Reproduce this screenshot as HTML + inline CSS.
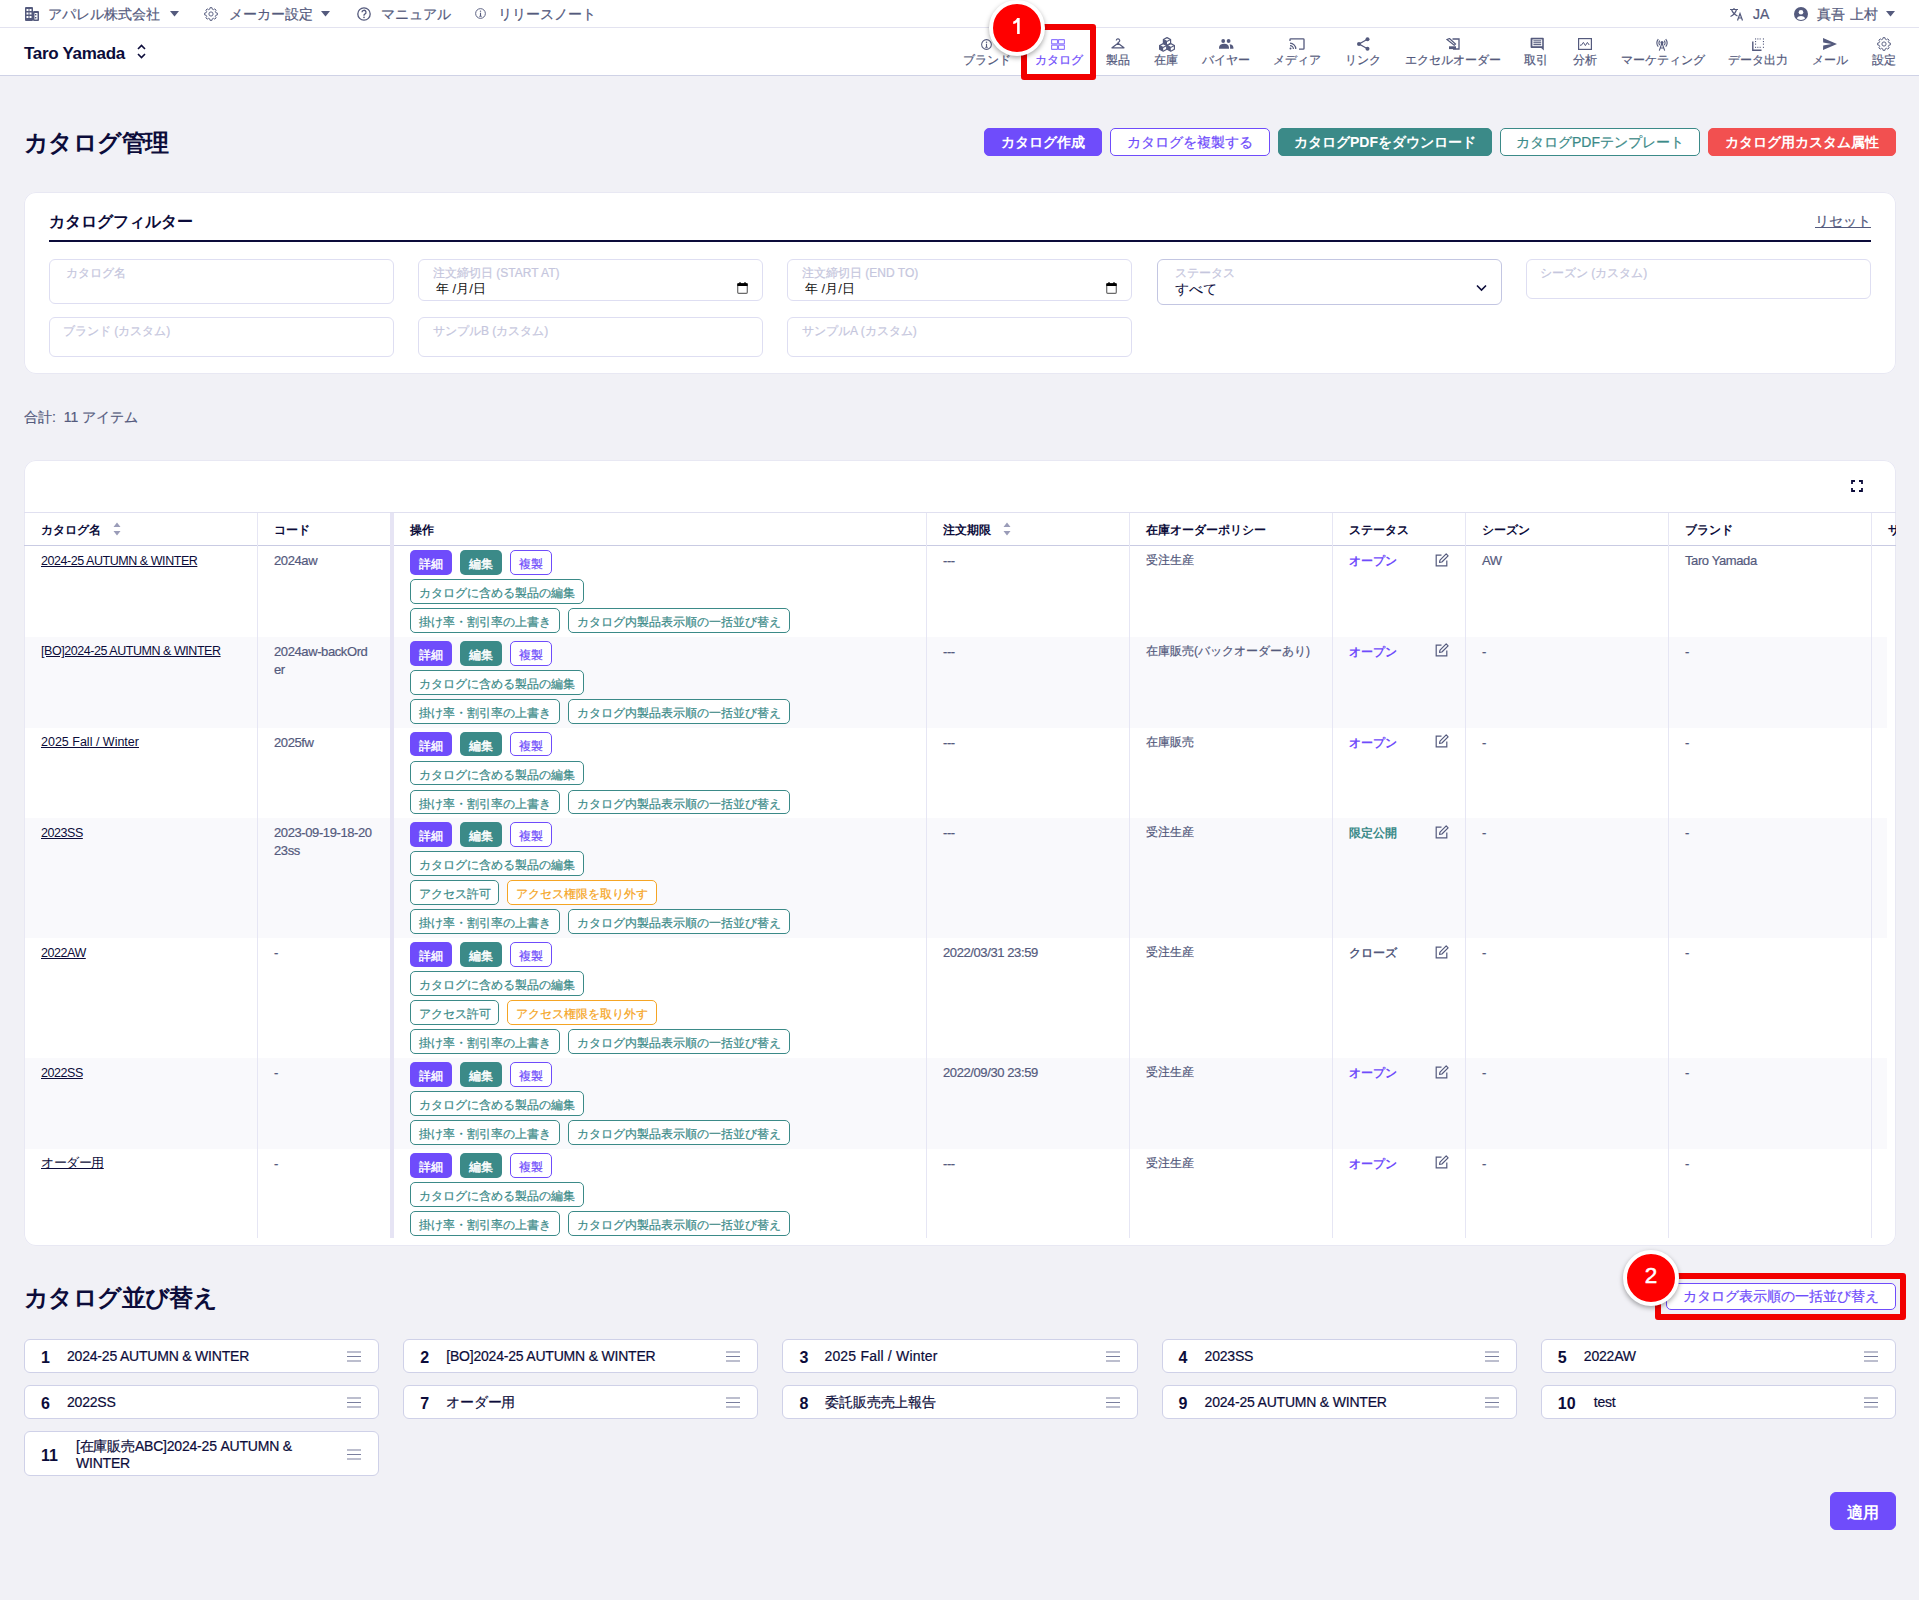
<!DOCTYPE html>
<html lang="ja">
<head>
<meta charset="utf-8">
<style>
*{box-sizing:border-box;margin:0;padding:0}
html,body{width:1919px;height:1600px;overflow:hidden}
body{background:#f1f1f6;font-family:"Liberation Sans",sans-serif;color:#0c0c3a;position:relative}
.abs{position:absolute}
svg{display:block}
/* top bar */
#topbar{left:0;top:0;width:1919px;height:28px;background:#fff;border-bottom:1px solid #e3e3f0}
#topbar .t{position:absolute;top:5px;font-size:14px;line-height:18px;color:#545a7d;white-space:nowrap}
#nav{left:0;top:28px;width:1919px;height:48px;background:#fff;border-bottom:1px solid #cfd2e6}
#nav .brand{position:absolute;left:24px;top:15px;font-size:17px;font-weight:bold;line-height:22px;color:#0c0c3a;letter-spacing:-0.3px}
.nl{position:absolute;top:25px;width:120px;text-align:center;color:#545a7d;font-size:12px;line-height:14px;white-space:nowrap}
.nl.act{color:#6f4cfb}

.h1{font-size:24px;font-weight:bold;line-height:32px;color:#0c0c3a;white-space:nowrap;letter-spacing:-0.6px}
.btn{height:28px;border-radius:5px;font-size:14px;line-height:26px;text-align:center;white-space:nowrap;border:1px solid transparent}
.pf{background:#6f4cfb;color:#fff;font-weight:bold;border-color:#6f4cfb}
.po{background:#fff;color:#6f4cfb;border-color:#6f4cfb}
.tf{background:#3b8a88;color:#fff;font-weight:bold;border-color:#3b8a88}
.to{background:#fff;color:#3b8a88;border-color:#3b8a88}
.rf{background:#f25050;color:#fff;font-weight:bold;border-color:#f25050}
.card{background:#fff;border-radius:12px;box-shadow:inset 0 0 0 1px #e8e8f3}
.fh{font-size:16px;font-weight:bold;line-height:22px;color:#0c0c3a;white-space:nowrap}
.reset{font-size:14px;line-height:20px;color:#545a7d;text-decoration:underline;white-space:nowrap}
.inp{width:345px;border:1px solid #dedef2;border-radius:6px;background:#fff}
.inp.sel{border-color:#c3c6e2}
.lbl{position:absolute;left:14px;top:5px;font-size:12px;line-height:16px;color:#c5c6dd;white-space:nowrap}
.dt{position:absolute;left:17px;top:21px;font-size:13px;line-height:16px;color:#111;white-space:nowrap}
.sv{position:absolute;left:17px;top:20px;font-size:14px;line-height:18px;color:#0c0c3a;white-space:nowrap}
.total{font-size:14px;line-height:20px;color:#545a7d;white-space:nowrap}

.rowbg{background:#f9f9fc}
.hl{height:1px;background:#e0e0f0}
.hl2{height:1px;background:#c9cbe3}
.vl{width:1px;background:#e6e6f4}
.vthick{width:4px;background:#e6e4f4}
.th{font-size:12px;font-weight:bold;line-height:18px;color:#0c0c3a;white-space:nowrap}
.td{font-size:13px;line-height:18px;color:#545a7d;white-space:nowrap;letter-spacing:-0.4px}
.td.jp{font-size:12px;letter-spacing:0}
.tdl{font-size:12.5px;letter-spacing:-0.45px;line-height:18px;color:#0c0c3a;white-space:nowrap;text-decoration:underline}
.st{font-size:12px;font-weight:bold;line-height:18px;white-space:nowrap}
.st.op{color:#6f4cfb}.st.lt{color:#3b8a88}.st.cl{color:#545a7d}
.sb{height:24.8px;border-radius:5px;font-size:12px;line-height:26.4px;text-align:center;white-space:nowrap;border:1px solid transparent}
.pf2{background:#6f4cfb;color:#fff;-webkit-text-stroke:0.4px #fff}
.tf2{background:#3b8a88;color:#fff;-webkit-text-stroke:0.4px #fff}
.po2{background:#fff;color:#6f4cfb;border-color:#6f4cfb}
.to2{background:#fff;color:#3b8a88;border-color:#3b8a88}
.oo2{background:#fff;color:#f5a524;border-color:#f5a524}

.si{background:#fff;border:1px solid #cfd1e8;border-radius:6px}
.sn{font-size:16px;font-weight:bold;line-height:22px;color:#0c0c3a;white-space:nowrap}
.stx{font-size:14px;line-height:20px;color:#0c0c3a;white-space:nowrap;letter-spacing:-0.2px}
.redbox{border:6px solid #f20000;border-radius:3px}
.badge{width:56px;height:56px;border-radius:50%;background:#f00;border:4px solid #fff;box-shadow:0 2px 5px rgba(0,0,0,.35);color:#fff;font-size:23px;line-height:48px;text-align:center;font-family:"Liberation Sans",sans-serif}

.po,.to,.po2,.to2,.oo2,.lbl,.reset,#topbar .t,.nl,.td,.stx,.total{-webkit-text-stroke:0.2px currentColor}
</style>
</head>
<body>
<!-- TOP BAR -->
<div id="topbar" class="abs">
  <svg class="abs" style="left:25px;top:7px" width="14" height="14" viewBox="0 0 14 14"><g fill="#545a7d"><rect x="0" y="0" width="8" height="14" rx="1"/><rect x="8" y="4" width="6" height="10" rx="1"/></g><g fill="#fff"><rect x="1.5" y="2" width="2" height="2"/><rect x="4.5" y="2" width="2" height="2"/><rect x="1.5" y="5.5" width="2" height="2"/><rect x="4.5" y="5.5" width="2" height="2"/><rect x="1.5" y="9" width="2" height="2"/><rect x="4.5" y="9" width="2" height="2"/><rect x="9.5" y="6" width="3" height="6.5"/></g><g fill="#545a7d"><rect x="10" y="7" width="1.4" height="1.4"/><rect x="10" y="10" width="1.4" height="1.4"/></g></svg>
  <span class="t" style="left:48px">アパレル株式会社</span>
  <svg class="abs" style="left:170px;top:11px" width="9" height="6" viewBox="0 0 9 6"><path d="M0 0H9L4.5 5.5Z" fill="#545a7d"/></svg>
  <svg class="abs" style="left:204px;top:7px" width="14" height="14" viewBox="0 0 24 24"><path fill="none" stroke="#545a7d" stroke-width="1.6" stroke-linejoin="round" d="M20.33 9.86 L22.88 10.35 L22.88 13.65 L20.33 14.14 L19.40 16.38 L20.86 18.52 L18.52 20.86 L16.38 19.40 L14.14 20.33 L13.65 22.88 L10.35 22.88 L9.86 20.33 L7.62 19.40 L5.48 20.86 L3.14 18.52 L4.60 16.38 L3.67 14.14 L1.12 13.65 L1.12 10.35 L3.67 9.86 L4.60 7.62 L3.14 5.48 L5.48 3.14 L7.62 4.60 L9.86 3.67 L10.35 1.12 L13.65 1.12 L14.14 3.67 L16.38 4.60 L18.52 3.14 L20.86 5.48 L19.40 7.62Z"/><circle cx="12" cy="12" r="3.6" fill="none" stroke="#545a7d" stroke-width="1.6"/></svg>
  <span class="t" style="left:229px">メーカー設定</span>
  <svg class="abs" style="left:321px;top:11px" width="9" height="6" viewBox="0 0 9 6"><path d="M0 0H9L4.5 5.5Z" fill="#545a7d"/></svg>
  <svg class="abs" style="left:357px;top:7px" width="14" height="14" viewBox="0 0 14 14"><circle cx="7" cy="7" r="6.2" fill="none" stroke="#545a7d" stroke-width="1.3"/><path d="M5 5.3a2 2 0 1 1 2.8 1.8c-.6.3-.8.6-.8 1.3v.4" fill="none" stroke="#545a7d" stroke-width="1.3"/><circle cx="7" cy="10.4" r=".8" fill="#545a7d"/></svg>
  <span class="t" style="left:381px">マニュアル</span>
  <svg class="abs" style="left:475px;top:8px" width="11" height="11" viewBox="0 0 14 14"><circle cx="7" cy="7" r="6.2" fill="none" stroke="#545a7d" stroke-width="1.2"/><rect x="6.3" y="6" width="1.4" height="4.5" fill="#545a7d"/><rect x="5.3" y="10" width="3.4" height="1" fill="#545a7d"/><circle cx="7" cy="4" r=".9" fill="#545a7d"/></svg>
  <span class="t" style="left:498px">リリースノート</span>

  <svg class="abs" style="left:1729px;top:7px" width="15" height="14" viewBox="0 0 15 14"><path d="M1 2.5h8M5 1v1.5M2.5 2.5c1 3 3 5 6 6.5M7.5 2.5c-.8 3-2.8 5.5-6 7" fill="none" stroke="#545a7d" stroke-width="1.2"/><path d="M8.5 13.5l2.5-7 2.5 7M9.4 11h3.2" fill="none" stroke="#545a7d" stroke-width="1.2"/></svg>
  <span class="t" style="left:1753px">JA</span>
  <svg class="abs" style="left:1794px;top:7px" width="14" height="14" viewBox="0 0 14 14"><circle cx="7" cy="7" r="7" fill="#545a7d"/><circle cx="7" cy="5.3" r="2.3" fill="#fff"/><path d="M2.8 11.3c1-1.7 2.5-2.4 4.2-2.4s3.2.7 4.2 2.4c-1.1 1.1-2.6 1.7-4.2 1.7s-3.1-.6-4.2-1.7z" fill="#fff"/></svg>
  <span class="t" style="left:1817px;letter-spacing:0.3px">真吾 上村</span>
  <svg class="abs" style="left:1886px;top:11px" width="9" height="6" viewBox="0 0 9 6"><path d="M0 0H9L4.5 5.5Z" fill="#545a7d"/></svg>
</div>

<!-- NAV -->
<div id="nav" class="abs">
  <div class="brand">Taro Yamada</div>
  <svg class="abs" style="left:137px;top:16px" width="9" height="15" viewBox="0 0 9 15"><path d="M1 5L4.5 1.5 8 5M1 10l3.5 3.5L8 10" fill="none" stroke="#0c0c3a" stroke-width="1.6"/></svg>
  <!-- nav icons (absolute page coords minus nav top 28) -->
  <svg class="abs" style="left:981px;top:11px" width="11" height="11" viewBox="0 0 14 14"><circle cx="7" cy="7" r="6.2" fill="none" stroke="#545a7d" stroke-width="1.3"/><rect x="6.3" y="6" width="1.4" height="4.5" fill="#545a7d"/><rect x="5.3" y="10" width="3.4" height="1.1" fill="#545a7d"/><circle cx="7" cy="4" r=".95" fill="#545a7d"/></svg>
  <svg class="abs" style="left:1051px;top:10.5px" width="14" height="11" viewBox="0 0 14 11"><g fill="none" stroke="#8f78ff" stroke-width="1.1"><rect x="0.6" y="0.6" width="5.9" height="4.3" rx=".4"/><rect x="7.5" y="0.6" width="5.9" height="4.3" rx=".4"/><rect x="0.6" y="6.1" width="5.9" height="4.3" rx=".4"/><rect x="7.5" y="6.1" width="5.9" height="4.3" rx=".4"/></g><rect x="6.1" y="4.5" width="1.8" height="2" fill="#c4b8ff"/></svg>
  <svg class="abs" style="left:1111px;top:10px" width="14" height="11" viewBox="0 0 14 11"><path d="M5.3 2.6a1.7 1.7 0 1 1 2.4 1.5c-.5.2-.7.5-.7 1L7 5.3L1 9.8h12L7 5.3" fill="none" stroke="#545a7d" stroke-width="1.2" stroke-linejoin="round"/></svg>
  <svg class="abs" style="left:1158.5px;top:8.5px" width="16" height="15" viewBox="0 0 16 15"><polygon points="4.40,2.50 8.00,0.60 11.60,2.50 11.60,6.30 8.00,8.20 4.40,6.30" fill="#fff" stroke="#545a7d" stroke-width="1.2" stroke-linejoin="round"/><polygon points="4.40,2.50 8.00,4.40 8.00,8.20 4.40,6.30" fill="#545a7d"/><polyline points="4.40,2.50 8.00,4.40 11.60,2.50" fill="none" stroke="#545a7d" stroke-width="1.1"/><polygon points="0.60,8.50 4.20,6.60 7.80,8.50 7.80,12.30 4.20,14.20 0.60,12.30" fill="#fff" stroke="#545a7d" stroke-width="1.2" stroke-linejoin="round"/><polygon points="0.60,8.50 4.20,10.40 4.20,14.20 0.60,12.30" fill="#545a7d"/><polyline points="0.60,8.50 4.20,10.40 7.80,8.50" fill="none" stroke="#545a7d" stroke-width="1.1"/><polygon points="8.20,8.50 11.80,6.60 15.40,8.50 15.40,12.30 11.80,14.20 8.20,12.30" fill="#fff" stroke="#545a7d" stroke-width="1.2" stroke-linejoin="round"/><polygon points="8.20,8.50 11.80,10.40 11.80,14.20 8.20,12.30" fill="#545a7d"/><polyline points="8.20,8.50 11.80,10.40 15.40,8.50" fill="none" stroke="#545a7d" stroke-width="1.1"/></svg>
  <svg class="abs" style="left:1219px;top:11px" width="15" height="10" viewBox="0 0 15 10"><g fill="#545a7d"><circle cx="4.2" cy="2" r="1.9"/><circle cx="9.6" cy="2" r="1.9"/><path d="M0 8.5c0-2.5 2-3.8 5.2-3.8S9.5 6 10 8.3V9.8H0z"/><path d="M10.6 5.2c2 .1 3.5 1.1 3.8 3V9.8h-3.3V8c0-1-.2-2-.5-2.8z"/></g></svg>
  <svg class="abs" style="left:1289px;top:10px" width="16" height="12" viewBox="0 0 16 12"><path d="M1 3V1.6C1 1.2 1.3 .8 1.8 .8h12.4c.5 0 .8.4.8.8v8.8c0 .5-.3.8-.8.8H10" fill="none" stroke="#545a7d" stroke-width="1.3"/><path d="M1 5.2a5.8 5.8 0 0 1 5.8 5.8M1 7.6a3.4 3.4 0 0 1 3.4 3.4" fill="none" stroke="#545a7d" stroke-width="1.2"/><circle cx="1.5" cy="10.6" r="1" fill="#545a7d"/></svg>
  <svg class="abs" style="left:1357px;top:9px" width="13" height="14" viewBox="0 0 13 14"><g fill="#545a7d"><circle cx="10.5" cy="2.2" r="2"/><circle cx="2" cy="7" r="2"/><circle cx="10.5" cy="11.8" r="2"/></g><path d="M10.5 2.2L2 7l8.5 4.8" fill="none" stroke="#545a7d" stroke-width="1.3"/></svg>
  <svg class="abs" style="left:1446px;top:10px" width="14" height="12" viewBox="0 0 14 12"><path d="M6.5 1H13v10H7" fill="none" stroke="#545a7d" stroke-width="1.3"/><path d="M1 1.5l2.5-1 6 5.5-1.3 1.3z" fill="none" stroke="#545a7d" stroke-width="1.2"/><rect x="3" y="8.3" width="7" height="2.8" fill="#545a7d"/></svg>
  <svg class="abs" style="left:1530px;top:9px" width="15" height="14" viewBox="0 0 15 14"><path d="M1.4 .8h11.6c.5 0 .8.3.8.8v11.8l-2.6-2.3H1.4c-.4 0-.8-.3-.8-.8V1.6c0-.5.4-.8.8-.8z" fill="#545a7d"/><rect x="2.4" y="2.4" width="9.8" height="6.8" fill="#fff"/><g fill="#545a7d"><rect x="3.4" y="3.3" width="7.8" height="1.1"/><rect x="3.4" y="5.2" width="7.8" height="1.1"/><rect x="3.4" y="7.1" width="7.8" height="1.1"/></g></svg>
  <svg class="abs" style="left:1578px;top:10px" width="14" height="12" viewBox="0 0 14 12"><rect x=".6" y=".6" width="12.8" height="10.8" fill="none" stroke="#545a7d" stroke-width="1.2"/><path d="M2 7.2h1.4l2-2.8 2 3.2 2-3.2 1.8 2.6" fill="none" stroke="#545a7d" stroke-width="1"/></svg>
  <svg class="abs" style="left:1655px;top:10px" width="14" height="13" viewBox="0 0 14 13"><g fill="none" stroke="#545a7d" stroke-width="1.1"><path d="M3.3 1.2a6 6 0 0 0 0 7.4M10.7 1.2a6 6 0 0 1 0 7.4M4.8 2.6a3.8 3.8 0 0 0 0 4.6M9.2 2.6a3.8 3.8 0 0 1 0 4.6"/><path d="M7 5L4.3 12.6M7 5l2.7 7.6M5.2 10h3.6"/></g><circle cx="7" cy="4.6" r="1.5" fill="#545a7d"/></svg>
  <svg class="abs" style="left:1752px;top:10px" width="13" height="13" viewBox="0 0 13 13"><path d="M.8 3.5v8.7h8.7" fill="none" stroke="#545a7d" stroke-width="1.4"/><g fill="#545a7d"><rect x="3" y=".4" width="1.1" height="1.1"/><rect x="5.3" y=".4" width="1.1" height="1.1"/><rect x="7.6" y=".4" width="1.1" height="1.1"/><rect x="10.9" y=".4" width="1.1" height="1.1"/><rect x="3" y="3" width="1.1" height="1.1"/><rect x="10.9" y="3" width="1.1" height="1.1"/><rect x="3" y="5.6" width="1.1" height="1.1"/><rect x="10.9" y="5.6" width="1.1" height="1.1"/><rect x="3" y="8.8" width="1.1" height="1.1"/><rect x="5.3" y="8.8" width="1.1" height="1.1"/><rect x="7.6" y="8.8" width="1.1" height="1.1"/><rect x="10.9" y="8.8" width="1.1" height="1.1"/></g></svg>
  <svg class="abs" style="left:1823px;top:10px" width="14" height="12" viewBox="0 0 14 12"><path d="M0 0L14 6 0 12 .2 7.4 8.5 6 .2 4.6z" fill="#545a7d"/></svg>
  <svg class="abs" style="left:1877px;top:9px" width="14" height="14" viewBox="0 0 24 24"><path fill="none" stroke="#545a7d" stroke-width="1.6" stroke-linejoin="round" d="M20.33 9.86 L22.88 10.35 L22.88 13.65 L20.33 14.14 L19.40 16.38 L20.86 18.52 L18.52 20.86 L16.38 19.40 L14.14 20.33 L13.65 22.88 L10.35 22.88 L9.86 20.33 L7.62 19.40 L5.48 20.86 L3.14 18.52 L4.60 16.38 L3.67 14.14 L1.12 13.65 L1.12 10.35 L3.67 9.86 L4.60 7.62 L3.14 5.48 L5.48 3.14 L7.62 4.60 L9.86 3.67 L10.35 1.12 L13.65 1.12 L14.14 3.67 L16.38 4.60 L18.52 3.14 L20.86 5.48 L19.40 7.62Z"/><circle cx="12" cy="12" r="3.6" fill="none" stroke="#545a7d" stroke-width="1.6"/></svg>
  <!-- nav labels -->
  <span class="nl" style="left:926.6px">ブランド</span>
  <span class="nl act" style="left:998.5px">カタログ</span>
  <span class="nl" style="left:1058.3px">製品</span>
  <span class="nl" style="left:1106.3px">在庫</span>
  <span class="nl" style="left:1166px">バイヤー</span>
  <span class="nl" style="left:1237.2px">メディア</span>
  <span class="nl" style="left:1303px">リンク</span>
  <span class="nl" style="left:1392.8px">エクセルオーダー</span>
  <span class="nl" style="left:1476.4px">取引</span>
  <span class="nl" style="left:1524.8px">分析</span>
  <span class="nl" style="left:1602.5px">マーケティング</span>
  <span class="nl" style="left:1698px">データ出力</span>
  <span class="nl" style="left:1770.3px">メール</span>
  <span class="nl" style="left:1823.9px">設定</span>
</div>

<!-- TITLE + ACTION BUTTONS -->
<div class="abs h1" style="left:24px;top:127px">カタログ管理</div>
<div class="abs btn pf" style="left:984px;top:128px;width:118px">カタログ作成</div>
<div class="abs btn po" style="left:1110px;top:128px;width:160px">カタログを複製する</div>
<div class="abs btn tf" style="left:1278px;top:128px;width:214px">カタログPDFをダウンロード</div>
<div class="abs btn to" style="left:1500px;top:128px;width:200px">カタログPDFテンプレート</div>
<div class="abs btn rf" style="left:1708px;top:128px;width:188px">カタログ用カスタム属性</div>

<!-- FILTER CARD -->
<div class="abs card" style="left:24px;top:192px;width:1872px;height:182px">
  <div class="abs fh" style="left:25px;top:19px">カタログフィルター</div>
  <div class="abs reset" style="left:1791px;top:19px">リセット</div>
  <div class="abs" style="left:25px;top:48px;width:1822px;height:2px;background:#0c0c3a"></div>
  <!-- row 1 -->
  <div class="abs inp" style="left:25px;top:67px;height:45px"><span class="lbl" style="left:16px">カタログ名</span></div>
  <div class="abs inp" style="left:394px;top:67px;height:42px"><span class="lbl">注文締切日 (START AT)</span><span class="dt">年 /月/日</span>
    <svg class="abs" style="left:318px;top:22px" width="11" height="12" viewBox="0 0 11 12"><rect x=".7" y="1.7" width="9.6" height="9.6" rx="1" fill="none" stroke="#6a6a6a" stroke-width="1.2"/><rect x=".3" y="1.3" width="10.4" height="2.8" rx=".6" fill="#000"/><rect x="2.3" y=".2" width="1.4" height="2" fill="#000"/><rect x="7.3" y=".2" width="1.4" height="2" fill="#000"/></svg></div>
  <div class="abs inp" style="left:763px;top:67px;height:42px"><span class="lbl">注文締切日 (END TO)</span><span class="dt">年 /月/日</span>
    <svg class="abs" style="left:318px;top:22px" width="11" height="12" viewBox="0 0 11 12"><rect x=".7" y="1.7" width="9.6" height="9.6" rx="1" fill="none" stroke="#6a6a6a" stroke-width="1.2"/><rect x=".3" y="1.3" width="10.4" height="2.8" rx=".6" fill="#000"/><rect x="2.3" y=".2" width="1.4" height="2" fill="#000"/><rect x="7.3" y=".2" width="1.4" height="2" fill="#000"/></svg></div>
  <div class="abs inp sel" style="left:1133px;top:67px;height:46px"><span class="lbl" style="left:17px">ステータス</span><span class="sv">すべて</span>
    <svg class="abs" style="left:318px;top:24px" width="11" height="8" viewBox="0 0 11 8"><path d="M1 1.5l4.5 4.5L10 1.5" fill="none" stroke="#0c0c3a" stroke-width="1.6"/></svg></div>
  <div class="abs inp" style="left:1502px;top:67px;height:40px"><span class="lbl" style="left:13px">シーズン (カスタム)</span></div>
  <!-- row 2 -->
  <div class="abs inp" style="left:25px;top:125px;height:40px"><span class="lbl" style="left:13px">ブランド (カスタム)</span></div>
  <div class="abs inp" style="left:394px;top:125px;height:40px"><span class="lbl">サンプルB (カスタム)</span></div>
  <div class="abs inp" style="left:763px;top:125px;height:40px"><span class="lbl">サンプルA (カスタム)</span></div>
</div>

<div class="abs total" style="left:24px;top:407px">合計:&nbsp; 11 アイテム</div>

<!-- TABLE CARD -->
<div class="abs card" id="tcard" style="left:24px;top:460px;width:1872px;height:786px;overflow:hidden">
<svg class="abs" style="left:1827px;top:20px" width="12" height="12" viewBox="0 0 12 12"><path d="M1 4V1h3M8 1h3v3M11 8v3H8M4 11H1V8" fill="none" stroke="#0c0c3a" stroke-width="1.8"/></svg>
<div class="abs rowbg" style="left:1px;top:176.8px;width:1862px;height:90.8px"></div>
<div class="abs rowbg" style="left:1px;top:358.4px;width:1862px;height:119.8px"></div>
<div class="abs rowbg" style="left:1px;top:598.0px;width:1862px;height:90.8px"></div>
<div class="abs hl" style="left:0;top:52px;width:1872px"></div>
<div class="abs hl2" style="left:0;top:85px;width:1872px"></div>
<div class="abs vl" style="left:233px;top:53px;height:725px"></div>
<div class="abs vl" style="left:902px;top:53px;height:725px"></div>
<div class="abs vl" style="left:1105px;top:53px;height:725px"></div>
<div class="abs vl" style="left:1308px;top:53px;height:725px"></div>
<div class="abs vl" style="left:1441px;top:53px;height:725px"></div>
<div class="abs vl" style="left:1644px;top:53px;height:725px"></div>
<div class="abs vl" style="left:1847px;top:53px;height:725px"></div>
<div class="abs vthick" style="left:366px;top:53px;height:725px"></div>
<div class="abs th" style="left:17px;top:61px">カタログ名</div>
<div class="abs th" style="left:250px;top:61px">コード</div>
<div class="abs th" style="left:386px;top:61px">操作</div>
<div class="abs th" style="left:919px;top:61px">注文期限</div>
<div class="abs th" style="left:1122px;top:61px">在庫オーダーポリシー</div>
<div class="abs th" style="left:1325px;top:61px">ステータス</div>
<div class="abs th" style="left:1458px;top:61px">シーズン</div>
<div class="abs th" style="left:1661px;top:61px">ブランド</div>
<div class="abs th" style="left:1864px;top:61px">サンプルA</div>
<svg class="abs" style="left:89px;top:62px" width="8" height="14" viewBox="0 0 8 14"><path d="M4 0.5L7.5 5H0.5z M4 13.5L7.5 9H0.5z" fill="#9a9cb8"/></svg>
<svg class="abs" style="left:979px;top:62px" width="8" height="14" viewBox="0 0 8 14"><path d="M4 0.5L7.5 5H0.5z M4 13.5L7.5 9H0.5z" fill="#9a9cb8"/></svg>
<div class="abs tdl" style="left:17px;top:91.5px">2024-25 AUTUMN &amp; WINTER</div>
<div class="abs td" style="left:250px;top:92.0px;width:110px">2024aw</div>
<div class="abs td" style="left:919px;top:92.0px">---</div>
<div class="abs td jp" style="left:1122px;top:91.0px">受注生産</div>
<div class="abs st op" style="left:1325px;top:92.0px">オープン</div>
<svg class="abs" style="left:1411px;top:92.5px" width="14" height="14" viewBox="0 0 14 14"><path d="M6.5 2.2H1.2v10.6h10.6V7.5" fill="none" stroke="#545a7d" stroke-width="1.2"/><path d="M11.2.9l1.9 1.9-6.2 6.2-2.4.5.5-2.4z" fill="none" stroke="#545a7d" stroke-width="1.2" stroke-linejoin="round"/></svg>
<div class="abs td" style="left:1458px;top:92.0px">AW</div>
<div class="abs td" style="left:1661px;top:92.0px">Taro Yamada</div>
<div class="abs sb pf2" style="left:386px;top:90.0px;width:42px">詳細</div>
<div class="abs sb tf2" style="left:436px;top:90.0px;width:42px">編集</div>
<div class="abs sb po2" style="left:486px;top:90.0px;width:42px">複製</div>
<div class="abs sb to2" style="left:386px;top:119.0px;width:174px">カタログに含める製品の編集</div>
<div class="abs sb to2" style="left:386px;top:148.0px;width:150px">掛け率・割引率の上書き</div>
<div class="abs sb to2" style="left:544px;top:148.0px;width:222px">カタログ内製品表示順の一括並び替え</div>
<div class="abs tdl" style="left:17px;top:182.3px">[BO]2024-25 AUTUMN &amp; WINTER</div>
<div class="abs td" style="left:250px;top:182.8px;width:110px">2024aw-backOrd<br>er</div>
<div class="abs td" style="left:919px;top:182.8px">---</div>
<div class="abs td jp" style="left:1122px;top:181.8px">在庫販売(バックオーダーあり)</div>
<div class="abs st op" style="left:1325px;top:182.8px">オープン</div>
<svg class="abs" style="left:1411px;top:183.3px" width="14" height="14" viewBox="0 0 14 14"><path d="M6.5 2.2H1.2v10.6h10.6V7.5" fill="none" stroke="#545a7d" stroke-width="1.2"/><path d="M11.2.9l1.9 1.9-6.2 6.2-2.4.5.5-2.4z" fill="none" stroke="#545a7d" stroke-width="1.2" stroke-linejoin="round"/></svg>
<div class="abs td" style="left:1458px;top:182.8px">-</div>
<div class="abs td" style="left:1661px;top:182.8px">-</div>
<div class="abs sb pf2" style="left:386px;top:180.8px;width:42px">詳細</div>
<div class="abs sb tf2" style="left:436px;top:180.8px;width:42px">編集</div>
<div class="abs sb po2" style="left:486px;top:180.8px;width:42px">複製</div>
<div class="abs sb to2" style="left:386px;top:209.8px;width:174px">カタログに含める製品の編集</div>
<div class="abs sb to2" style="left:386px;top:238.8px;width:150px">掛け率・割引率の上書き</div>
<div class="abs sb to2" style="left:544px;top:238.8px;width:222px">カタログ内製品表示順の一括並び替え</div>
<div class="abs tdl" style="left:17px;top:273.1px;letter-spacing:0">2025 Fall / Winter</div>
<div class="abs td" style="left:250px;top:273.6px;width:110px">2025fw</div>
<div class="abs td" style="left:919px;top:273.6px">---</div>
<div class="abs td jp" style="left:1122px;top:272.6px">在庫販売</div>
<div class="abs st op" style="left:1325px;top:273.6px">オープン</div>
<svg class="abs" style="left:1411px;top:274.1px" width="14" height="14" viewBox="0 0 14 14"><path d="M6.5 2.2H1.2v10.6h10.6V7.5" fill="none" stroke="#545a7d" stroke-width="1.2"/><path d="M11.2.9l1.9 1.9-6.2 6.2-2.4.5.5-2.4z" fill="none" stroke="#545a7d" stroke-width="1.2" stroke-linejoin="round"/></svg>
<div class="abs td" style="left:1458px;top:273.6px">-</div>
<div class="abs td" style="left:1661px;top:273.6px">-</div>
<div class="abs sb pf2" style="left:386px;top:271.6px;width:42px">詳細</div>
<div class="abs sb tf2" style="left:436px;top:271.6px;width:42px">編集</div>
<div class="abs sb po2" style="left:486px;top:271.6px;width:42px">複製</div>
<div class="abs sb to2" style="left:386px;top:300.6px;width:174px">カタログに含める製品の編集</div>
<div class="abs sb to2" style="left:386px;top:329.6px;width:150px">掛け率・割引率の上書き</div>
<div class="abs sb to2" style="left:544px;top:329.6px;width:222px">カタログ内製品表示順の一括並び替え</div>
<div class="abs tdl" style="left:17px;top:363.9px">2023SS</div>
<div class="abs td" style="left:250px;top:364.4px;width:110px">2023-09-19-18-20<br>23ss</div>
<div class="abs td" style="left:919px;top:364.4px">---</div>
<div class="abs td jp" style="left:1122px;top:363.4px">受注生産</div>
<div class="abs st lt" style="left:1325px;top:364.4px">限定公開</div>
<svg class="abs" style="left:1411px;top:364.9px" width="14" height="14" viewBox="0 0 14 14"><path d="M6.5 2.2H1.2v10.6h10.6V7.5" fill="none" stroke="#545a7d" stroke-width="1.2"/><path d="M11.2.9l1.9 1.9-6.2 6.2-2.4.5.5-2.4z" fill="none" stroke="#545a7d" stroke-width="1.2" stroke-linejoin="round"/></svg>
<div class="abs td" style="left:1458px;top:364.4px">-</div>
<div class="abs td" style="left:1661px;top:364.4px">-</div>
<div class="abs sb pf2" style="left:386px;top:362.4px;width:42px">詳細</div>
<div class="abs sb tf2" style="left:436px;top:362.4px;width:42px">編集</div>
<div class="abs sb po2" style="left:486px;top:362.4px;width:42px">複製</div>
<div class="abs sb to2" style="left:386px;top:391.4px;width:174px">カタログに含める製品の編集</div>
<div class="abs sb to2" style="left:386px;top:420.4px;width:89px">アクセス許可</div>
<div class="abs sb oo2" style="left:483px;top:420.4px;width:150px">アクセス権限を取り外す</div>
<div class="abs sb to2" style="left:386px;top:449.4px;width:150px">掛け率・割引率の上書き</div>
<div class="abs sb to2" style="left:544px;top:449.4px;width:222px">カタログ内製品表示順の一括並び替え</div>
<div class="abs tdl" style="left:17px;top:483.7px">2022AW</div>
<div class="abs td" style="left:250px;top:484.2px;width:110px">-</div>
<div class="abs td" style="left:919px;top:484.2px">2022/03/31 23:59</div>
<div class="abs td jp" style="left:1122px;top:483.2px">受注生産</div>
<div class="abs st cl" style="left:1325px;top:484.2px">クローズ</div>
<svg class="abs" style="left:1411px;top:484.7px" width="14" height="14" viewBox="0 0 14 14"><path d="M6.5 2.2H1.2v10.6h10.6V7.5" fill="none" stroke="#545a7d" stroke-width="1.2"/><path d="M11.2.9l1.9 1.9-6.2 6.2-2.4.5.5-2.4z" fill="none" stroke="#545a7d" stroke-width="1.2" stroke-linejoin="round"/></svg>
<div class="abs td" style="left:1458px;top:484.2px">-</div>
<div class="abs td" style="left:1661px;top:484.2px">-</div>
<div class="abs sb pf2" style="left:386px;top:482.2px;width:42px">詳細</div>
<div class="abs sb tf2" style="left:436px;top:482.2px;width:42px">編集</div>
<div class="abs sb po2" style="left:486px;top:482.2px;width:42px">複製</div>
<div class="abs sb to2" style="left:386px;top:511.2px;width:174px">カタログに含める製品の編集</div>
<div class="abs sb to2" style="left:386px;top:540.2px;width:89px">アクセス許可</div>
<div class="abs sb oo2" style="left:483px;top:540.2px;width:150px">アクセス権限を取り外す</div>
<div class="abs sb to2" style="left:386px;top:569.2px;width:150px">掛け率・割引率の上書き</div>
<div class="abs sb to2" style="left:544px;top:569.2px;width:222px">カタログ内製品表示順の一括並び替え</div>
<div class="abs tdl" style="left:17px;top:603.5px">2022SS</div>
<div class="abs td" style="left:250px;top:604.0px;width:110px">-</div>
<div class="abs td" style="left:919px;top:604.0px">2022/09/30 23:59</div>
<div class="abs td jp" style="left:1122px;top:603.0px">受注生産</div>
<div class="abs st op" style="left:1325px;top:604.0px">オープン</div>
<svg class="abs" style="left:1411px;top:604.5px" width="14" height="14" viewBox="0 0 14 14"><path d="M6.5 2.2H1.2v10.6h10.6V7.5" fill="none" stroke="#545a7d" stroke-width="1.2"/><path d="M11.2.9l1.9 1.9-6.2 6.2-2.4.5.5-2.4z" fill="none" stroke="#545a7d" stroke-width="1.2" stroke-linejoin="round"/></svg>
<div class="abs td" style="left:1458px;top:604.0px">-</div>
<div class="abs td" style="left:1661px;top:604.0px">-</div>
<div class="abs sb pf2" style="left:386px;top:602.0px;width:42px">詳細</div>
<div class="abs sb tf2" style="left:436px;top:602.0px;width:42px">編集</div>
<div class="abs sb po2" style="left:486px;top:602.0px;width:42px">複製</div>
<div class="abs sb to2" style="left:386px;top:631.0px;width:174px">カタログに含める製品の編集</div>
<div class="abs sb to2" style="left:386px;top:660.0px;width:150px">掛け率・割引率の上書き</div>
<div class="abs sb to2" style="left:544px;top:660.0px;width:222px">カタログ内製品表示順の一括並び替え</div>
<div class="abs tdl" style="left:17px;top:694.3px">オーダー用</div>
<div class="abs td" style="left:250px;top:694.8px;width:110px">-</div>
<div class="abs td" style="left:919px;top:694.8px">---</div>
<div class="abs td jp" style="left:1122px;top:693.8px">受注生産</div>
<div class="abs st op" style="left:1325px;top:694.8px">オープン</div>
<svg class="abs" style="left:1411px;top:695.3px" width="14" height="14" viewBox="0 0 14 14"><path d="M6.5 2.2H1.2v10.6h10.6V7.5" fill="none" stroke="#545a7d" stroke-width="1.2"/><path d="M11.2.9l1.9 1.9-6.2 6.2-2.4.5.5-2.4z" fill="none" stroke="#545a7d" stroke-width="1.2" stroke-linejoin="round"/></svg>
<div class="abs td" style="left:1458px;top:694.8px">-</div>
<div class="abs td" style="left:1661px;top:694.8px">-</div>
<div class="abs sb pf2" style="left:386px;top:692.8px;width:42px">詳細</div>
<div class="abs sb tf2" style="left:436px;top:692.8px;width:42px">編集</div>
<div class="abs sb po2" style="left:486px;top:692.8px;width:42px">複製</div>
<div class="abs sb to2" style="left:386px;top:721.8px;width:174px">カタログに含める製品の編集</div>
<div class="abs sb to2" style="left:386px;top:750.8px;width:150px">掛け率・割引率の上書き</div>
<div class="abs sb to2" style="left:544px;top:750.8px;width:222px">カタログ内製品表示順の一括並び替え</div>
</div>
<!-- SORT SECTION -->
<div class="abs h1" style="left:24px;top:1282px">カタログ並び替え</div>
<div class="abs si" style="left:24.0px;top:1339px;width:355.2px;height:34px">
<span class="abs sn" style="left:16px;top:7.0px">1</span>
<span class="abs stx" style="left:42px;top:6.0px">2024-25 AUTUMN &amp; WINTER</span>
<svg class="abs" style="left:322.2px;top:11.0px" width="14" height="11" viewBox="0 0 14 11"><path d="M0 1h14M0 5.5h14M0 10h14" stroke="#7a7f9e" stroke-width="1.2"/></svg>
</div>
<div class="abs si" style="left:403.2px;top:1339px;width:355.2px;height:34px">
<span class="abs sn" style="left:16px;top:7.0px">2</span>
<span class="abs stx" style="left:42px;top:6.0px">[BO]2024-25 AUTUMN &amp; WINTER</span>
<svg class="abs" style="left:322.2px;top:11.0px" width="14" height="11" viewBox="0 0 14 11"><path d="M0 1h14M0 5.5h14M0 10h14" stroke="#7a7f9e" stroke-width="1.2"/></svg>
</div>
<div class="abs si" style="left:782.4px;top:1339px;width:355.2px;height:34px">
<span class="abs sn" style="left:16px;top:7.0px">3</span>
<span class="abs stx" style="left:41px;top:6.0px;letter-spacing:0.2px">2025 Fall / Winter</span>
<svg class="abs" style="left:322.2px;top:11.0px" width="14" height="11" viewBox="0 0 14 11"><path d="M0 1h14M0 5.5h14M0 10h14" stroke="#7a7f9e" stroke-width="1.2"/></svg>
</div>
<div class="abs si" style="left:1161.6px;top:1339px;width:355.2px;height:34px">
<span class="abs sn" style="left:16px;top:7.0px">4</span>
<span class="abs stx" style="left:42px;top:6.0px">2023SS</span>
<svg class="abs" style="left:322.2px;top:11.0px" width="14" height="11" viewBox="0 0 14 11"><path d="M0 1h14M0 5.5h14M0 10h14" stroke="#7a7f9e" stroke-width="1.2"/></svg>
</div>
<div class="abs si" style="left:1540.8px;top:1339px;width:355.2px;height:34px">
<span class="abs sn" style="left:16px;top:7.0px">5</span>
<span class="abs stx" style="left:42px;top:6.0px">2022AW</span>
<svg class="abs" style="left:322.2px;top:11.0px" width="14" height="11" viewBox="0 0 14 11"><path d="M0 1h14M0 5.5h14M0 10h14" stroke="#7a7f9e" stroke-width="1.2"/></svg>
</div>
<div class="abs si" style="left:24.0px;top:1385px;width:355.2px;height:34px">
<span class="abs sn" style="left:16px;top:7.0px">6</span>
<span class="abs stx" style="left:42px;top:6.0px">2022SS</span>
<svg class="abs" style="left:322.2px;top:11.0px" width="14" height="11" viewBox="0 0 14 11"><path d="M0 1h14M0 5.5h14M0 10h14" stroke="#7a7f9e" stroke-width="1.2"/></svg>
</div>
<div class="abs si" style="left:403.2px;top:1385px;width:355.2px;height:34px">
<span class="abs sn" style="left:16px;top:7.0px">7</span>
<span class="abs stx" style="left:42px;top:6.0px">オーダー用</span>
<svg class="abs" style="left:322.2px;top:11.0px" width="14" height="11" viewBox="0 0 14 11"><path d="M0 1h14M0 5.5h14M0 10h14" stroke="#7a7f9e" stroke-width="1.2"/></svg>
</div>
<div class="abs si" style="left:782.4px;top:1385px;width:355.2px;height:34px">
<span class="abs sn" style="left:16px;top:7.0px">8</span>
<span class="abs stx" style="left:42px;top:6.0px">委託販売売上報告</span>
<svg class="abs" style="left:322.2px;top:11.0px" width="14" height="11" viewBox="0 0 14 11"><path d="M0 1h14M0 5.5h14M0 10h14" stroke="#7a7f9e" stroke-width="1.2"/></svg>
</div>
<div class="abs si" style="left:1161.6px;top:1385px;width:355.2px;height:34px">
<span class="abs sn" style="left:16px;top:7.0px">9</span>
<span class="abs stx" style="left:42px;top:6.0px">2024-25 AUTUMN &amp; WINTER</span>
<svg class="abs" style="left:322.2px;top:11.0px" width="14" height="11" viewBox="0 0 14 11"><path d="M0 1h14M0 5.5h14M0 10h14" stroke="#7a7f9e" stroke-width="1.2"/></svg>
</div>
<div class="abs si" style="left:1540.8px;top:1385px;width:355.2px;height:34px">
<span class="abs sn" style="left:16px;top:7.0px">10</span>
<span class="abs stx" style="left:52px;top:6.0px">test</span>
<svg class="abs" style="left:322.2px;top:11.0px" width="14" height="11" viewBox="0 0 14 11"><path d="M0 1h14M0 5.5h14M0 10h14" stroke="#7a7f9e" stroke-width="1.2"/></svg>
</div>
<div class="abs si" style="left:24.0px;top:1431px;width:355.2px;height:45px">
<span class="abs sn" style="left:16px;top:12.5px">11</span>
<span class="abs stx" style="left:51px;top:6px;line-height:17px">[在庫販売ABC]2024-25 AUTUMN &amp;<br>WINTER</span>
<svg class="abs" style="left:322.2px;top:16.5px" width="14" height="11" viewBox="0 0 14 11"><path d="M0 1h14M0 5.5h14M0 10h14" stroke="#7a7f9e" stroke-width="1.2"/></svg>
</div>
<div class="abs redbox" style="left:1655px;top:1273px;width:251px;height:47px"></div>
<div class="abs btn po" style="left:1666px;top:1283px;width:230px;height:27px;line-height:25px">カタログ表示順の一括並び替え</div>
<div class="abs btn pf" style="left:1830px;top:1492px;width:66px;height:38px;line-height:40px;font-size:16px;border-radius:6px">適用</div>
<div class="abs redbox" style="left:1021px;top:24px;width:75px;height:56px"></div>
<div class="abs badge" style="left:989px;top:0px"><svg style="position:absolute;left:20px;top:14px" width="9" height="17" viewBox="0 0 9 17"><path d="M4.1 0H6.7V16H4.1V4.2C3.2 5.1 1.8 5.7 .2 6.1V3.6C2 3.1 3.3 1.8 4.1 0z" fill="#fff"/></svg></div>
<div class="abs badge" style="left:1623px;top:1249.5px;font-size:22.5px;line-height:43px;-webkit-text-stroke:0.5px #fff">2</div>
<!--MAIN-->
</body>
</html>
